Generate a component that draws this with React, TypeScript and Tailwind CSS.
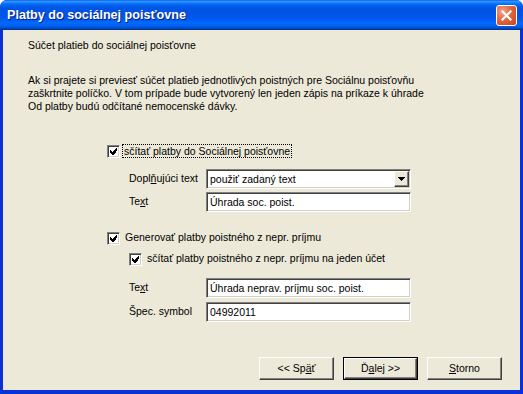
import React from 'react';

const sunken =
  'border border-t-[#808080] border-l-[#808080] border-r-white border-b-white shadow-[inset_1px_1px_0_#404040,inset_-1px_-1px_0_#d4d0c8]';
const raised =
  'border border-t-white border-l-white border-r-[#404040] border-b-[#404040] shadow-[inset_-1px_-1px_0_#808080,inset_1px_1px_0_#ece9d8]';

const CheckBox: React.FC = () => (
  <span className={`w-[13px] h-[13px] bg-white flex items-center justify-center shrink-0 ${sunken}`}>
    <svg width="7" height="7" viewBox="0 0 7 7" shapeRendering="crispEdges">
      <path d="M6 0h1v3h-1zM5 1h1v4h-1zM4 2h1v4h-1zM3 3h1v4h-1zM2 4h1v3h-1zM1 3h1v3h-1zM0 2h1v3h-1z" fill="#000" />
    </svg>
  </span>
);

const TextBox: React.FC<{ value: string }> = ({ value }) => (
  <div className={`w-[205px] h-[20px] bg-white flex items-center pl-[3px] ${sunken}`}>
    <span className="leading-none">{value}</span>
  </div>
);

const Combo: React.FC<{ value: string }> = ({ value }) => (
  <div className={`w-[205px] h-[20px] bg-white flex items-center pl-[3px] pr-[1px] ${sunken}`}>
    <span className="flex-1 leading-none">{value}</span>
    <span className={`w-[15px] h-[16px] bg-[#ece9d8] flex items-center justify-center ${raised}`}>
      <svg width="7" height="4" viewBox="0 0 7 4" shapeRendering="crispEdges">
        <path d="M0 0h7v1h-7zM1 1h5v1h-5zM2 2h3v1h-3zM3 3h1v1h-1z" fill="#000" />
      </svg>
    </span>
  </div>
);

const Button: React.FC<{ children: React.ReactNode; primary?: boolean }> = ({ children, primary }) =>
  primary ? (
    <div className="w-[75px] h-[23px] border border-black">
      <div className={`w-full h-full bg-[#ece9d8] flex items-center justify-center ${raised}`}>{children}</div>
    </div>
  ) : (
    <div className={`w-[75px] h-[23px] bg-[#ece9d8] flex items-center justify-center ${raised}`}>{children}</div>
  );

const App: React.FC = () => {
  return (
    <div className="w-[523px] h-[394px] flex flex-col bg-[#0831d9] rounded-t-[7px] overflow-hidden font-['Liberation_Sans',Arial,sans-serif] text-[10.5px] text-black">
      {/* title bar */}
      <div className="h-[30px] shrink-0 flex items-center pl-[7px] pr-[6px] bg-[linear-gradient(to_bottom,#0058ee_0%,#3593ff_4%,#288eff_7%,#127dff_10%,#036ffc_13%,#0262ee_18%,#0057e5_24%,#0054e3_30%,#0055eb_56%,#005bf5_66%,#026afe_76%,#0062ef_86%,#0052d6_92%,#0040ab_96%,#003092_100%)]">
        <span className="flex-1 text-white font-bold text-[12.6px] [text-shadow:1px_1px_0_#0a1e6e]">
          Platby do sociálnej poisťovne
        </span>
        <div className="w-[21px] h-[21px] rounded-[3px] border border-white bg-[radial-gradient(circle_at_30%_30%,#f0a58a_0%,#e2673f_45%,#c4431c_100%)] flex items-center justify-center">
          <svg width="11" height="11" viewBox="0 0 11 11">
            <path d="M1.5 1.5 L9.5 9.5 M9.5 1.5 L1.5 9.5" stroke="#fff" strokeWidth="2.2" strokeLinecap="square" />
          </svg>
        </div>
      </div>

      {/* client area */}
      <div className="flex-1 mx-[3px] mb-[4px] bg-[#ece9d8] flex flex-col pl-[25px] pt-[9px]">
        <p className="leading-[13px]">Súčet platieb do sociálnej poisťovne</p>
        <div className="mt-[22px] leading-[13px]">
          <p>Ak si prajete si previesť súčet platieb jednotlivých poistných pre Sociálnu poisťovňu</p>
          <p>zaškrtnite políčko. V tom prípade bude vytvorený len jeden zápis na príkaze k úhrade</p>
          <p>Od platby budú odčítané nemocenské dávky.</p>
        </div>

        <div className="ml-[79px] flex flex-col">
          <div className="mt-[31px] h-[14px] flex items-center gap-[3px]">
            <CheckBox />
            <span className="leading-[12px] px-[1px] outline outline-1 outline-dotted outline-black">
              sčítať platby do Sociálnej poisťovne
            </span>
          </div>

          <div className="mt-[11px] pl-[22px] flex flex-col gap-[3px]">
            <div className="flex items-center">
              <span className="w-[77px]">
                Dopl<span className="underline">ň</span>ujúci text
              </span>
              <Combo value="použiť zadaný text" />
            </div>
            <div className="flex items-center">
              <span className="w-[77px]">
                Te<span className="underline">x</span>t
              </span>
              <TextBox value="Úhrada soc. poist." />
            </div>
          </div>

          <div className="mt-[19px] h-[14px] flex items-center gap-[5px]">
            <CheckBox />
            <span>Generovať platby poistného z nepr. príjmu</span>
          </div>
          <div className="mt-[7px] ml-[22px] h-[14px] flex items-center gap-[5px]">
            <CheckBox />
            <span>sčítať platby poistného z nepr. príjmu na jeden účet</span>
          </div>

          <div className="mt-[12px] pl-[22px] flex flex-col gap-[4px]">
            <div className="flex items-center">
              <span className="w-[77px]">
                Te<span className="underline">x</span>t
              </span>
              <TextBox value="Úhrada neprav. príjmu soc. poist." />
            </div>
            <div className="flex items-center">
              <span className="w-[77px]">Špec. symbol</span>
              <TextBox value="04992011" />
            </div>
          </div>
        </div>

        <div className="mt-auto mb-[10px] pr-[18px] flex justify-end gap-[9px]">
          <Button>
            &lt;&lt; Sp<span className="underline">ä</span>ť
          </Button>
          <Button primary>
            <span>
              Ď<span className="underline">a</span>lej &gt;&gt;
            </span>
          </Button>
          <Button>
            <span>
              <span className="underline">S</span>torno
            </span>
          </Button>
        </div>
      </div>
    </div>
  );
};

export default App;
